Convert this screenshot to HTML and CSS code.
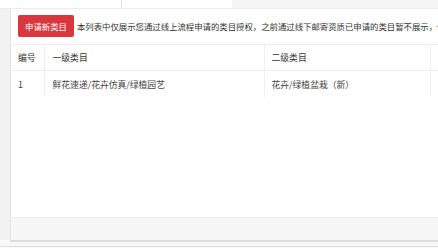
FILE: index.html
```html
<!DOCTYPE html>
<html lang="zh-CN">
<head>
  <meta charset="UTF-8" />
  <meta name="viewport" content="width=device-width, initial-scale=1.0"/>
  <title>类目授权</title>
  <link rel="stylesheet" href="styles.css">
</head>
<body>
  <div class="tabs">
    <div class="tab tab-first"></div>
    <div class="tab"></div>
    <div class="tab-rest"></div>
  </div>
  <div class="page">
    <div class="panel">
      <div class="toolbar">
        <button class="btn-apply">申请新类目</button>
        <span class="notice">本列表中仅展示您通过线上流程申请的类目授权，之前通过线下邮寄资质已申请的类目暂不展示，但如需查看请联系客服</span>
      </div>
      <table class="cat-table">
        <colgroup>
          <col class="c-no">
          <col class="c-first">
          <col class="c-second">
          <col class="c-more">
        </colgroup>
        <thead>
          <tr>
            <th>编号</th>
            <th>一级类目</th>
            <th>二级类目</th>
            <th></th>
          </tr>
        </thead>
        <tbody>
          <tr>
            <td>1</td>
            <td>鲜花速递/花卉仿真/绿植园艺</td>
            <td>花卉/绿植盆栽（新）</td>
            <td></td>
          </tr>
        </tbody>
      </table>
      <div class="spacer"></div>
      <div class="footer"></div>
    </div>
  </div>
  <div class="bottom"></div>
</body>
</html>
```

FILE: styles.css
```css
html, body {
  margin: 0;
  padding: 0;
}
body {
  width: 438px;
  height: 248px;
  overflow: hidden;
  background: #fafafa;
  font-family: "Noto Sans CJK SC", "Noto Sans", sans-serif;
  color: #333;
}
.tabs {
  display: flex;
  height: 8px;
  border-bottom: 1px solid #ececec;
}
.tab {
  width: 110px;
  background: #fff;
}
.tab-first {
  width: 121px;
  border-right: 1px solid #e6e6e6;
}
.tab-rest {
  flex: 1;
  background: #f5f5f5;
}
.page {
  padding-left: 10px;
  background: #f2f2f2;
}
.panel {
  display: flex;
  flex-direction: column;
  height: 231px;
  background: #fff;
  border-left: 1px solid #e2e2e2;
  box-shadow: 0 2px 0 #dcdcdc;
  overflow: hidden;
}
.toolbar {
  display: flex;
  align-items: center;
  padding: 6px 0 7px 7px;
  white-space: nowrap;
}
.btn-apply {
  width: 56px;
  height: 22px;
  padding: 0;
  margin-right: 3px;
  border: none;
  border-radius: 2px;
  background: #d9363e;
  color: #fff;
  font-family: inherit;
  font-size: 8.4px;
  flex-shrink: 0;
}
.notice {
  font-size: 8.4px;
  color: #333;
}
.cat-table {
  width: 520px;
  table-layout: fixed;
  border-collapse: collapse;
  font-size: 8.8px;
}
.c-no { width: 33px; }
.c-first { width: 220px; }
.c-second { width: 166px; }
.c-more { width: 101px; }
th, td {
  height: 25px;
  padding: 0 0 0 7px;
  text-align: left;
  font-weight: normal;
  border-top: 1px solid #ebebeb;
  border-bottom: 1px solid #ebebeb;
  border-left: 1px solid #efefef;
  white-space: nowrap;
}
th:first-child, td:first-child {
  border-left: none;
}
th:nth-child(2), td:nth-child(2) {
  padding-left: 8px;
}
td {
  height: 26px;
  color: #444;
}
tbody tr:last-child td {
  border-bottom: none;
}
.spacer {
  flex: 1;
}
.footer {
  height: 22px;
  background: #f7f7f7;
  border-top: 1px solid #efefef;
}
.bottom {
  height: 4px;
  margin-top: 2px;
  background: #f8f8f8;
  border-bottom: 1px solid #dedede;
}
```
